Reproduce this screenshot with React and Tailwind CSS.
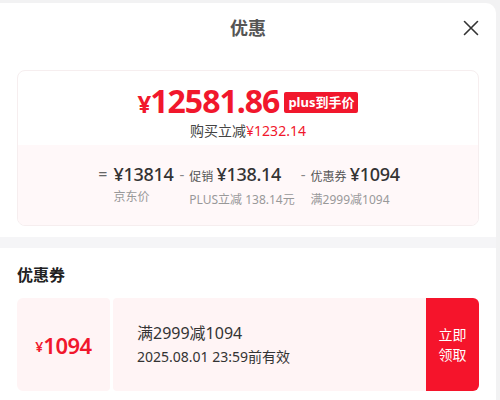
import React from "react";

export default function App() {
  const font = { fontFamily: '"Noto Sans", "Noto Sans CJK SC", sans-serif' };
  return (
    <div className="w-[500px] h-[400px] bg-[#f2f2f3] pt-[3px] pr-[4px] overflow-hidden" style={font}>
      <div className="bg-white rounded-tr-[10px] h-full flex flex-col">
        {/* header */}
        <div className="relative h-[50px] flex items-center justify-center shrink-0">
          <span className="text-[18px] font-bold text-[#555] leading-none">优惠</span>
          <svg className="absolute right-[17px] top-[17px]" width="16" height="16" viewBox="0 0 16 16" fill="none">
            <path d="M1.5 1.5L14.5 14.5M14.5 1.5L1.5 14.5" stroke="#333" strokeWidth="1.6" strokeLinecap="round" />
          </svg>
        </div>

        {/* price card */}
        <div className="px-[17px] pt-[17px] shrink-0">
          <div className="border border-[#f6eeef] rounded-[8px] overflow-hidden">
            <div className="h-[74px] flex flex-col items-center pt-[14px]">
              <div className="flex items-center gap-[5px]">
                <span className="text-[#f1172c] font-bold leading-none tracking-[-1px]">
                  <span className="text-[24px]">¥</span>
                  <span className="text-[32px]">12581.86</span>
                </span>
                <span className="bg-[#f1172c] text-white text-[13px] font-bold leading-none px-[4px] py-[4px] rounded-[2px] mt-[3px]">plus到手价</span>
              </div>
              <div className="mt-[7px] text-[14px] leading-none">
                <span className="text-[#444]">购买立减</span>
                <span className="text-[#f1172c]">¥1232.14</span>
              </div>
            </div>
            <div className="h-[80px] bg-[#fff8f9] flex justify-center pt-[17px]">
              <div className="flex gap-[6px] pl-[2px]">
                <div className="flex gap-[6px]">
                  <span className="text-[16px] text-[#666] leading-[24px]">=</span>
                  <div className="flex flex-col">
                    <span className="text-[18px] font-medium text-[#333] leading-[24px] tracking-[-0.3px]">¥13814</span>
                    <span className="text-[12px] text-[#999] leading-none mt-[5px]">京东价</span>
                  </div>
                </div>
                <div className="flex gap-[5px]">
                  <span className="text-[15px] text-[#888] leading-[24px]">-</span>
                  <div className="flex flex-col">
                    <span className="leading-[24px] text-[#333]">
                      <span className="text-[12px] text-[#555]">促销 </span>
                      <span className="text-[18px] font-medium tracking-[-0.3px]">¥138.14</span>
                    </span>
                    <span className="text-[12px] text-[#999] leading-none mt-[5px]">PLUS立减 138.14元</span>
                  </div>
                </div>
                <div className="flex gap-[5px]">
                  <span className="text-[15px] text-[#888] leading-[24px]">-</span>
                  <div className="flex flex-col">
                    <span className="leading-[24px] text-[#333]">
                      <span className="text-[12px] text-[#555]">优惠券 </span>
                      <span className="text-[18px] font-medium tracking-[-0.3px]">¥1094</span>
                    </span>
                    <span className="text-[12px] text-[#999] leading-none mt-[5px]">满2999减1094</span>
                  </div>
                </div>
              </div>
            </div>
          </div>
        </div>

        {/* gray band */}
        <div className="h-[11px] bg-[#f5f5f7] mt-[11px] shrink-0"></div>

        {/* coupons */}
        <div className="px-[17px] shrink-0">
          <div className="h-[50px] flex items-center text-[16px] font-bold text-[#222] pt-[3px]">优惠券</div>
          <div className="flex h-[93px]">
            <div className="w-[93px] bg-[#fff4f5] rounded-l-[6px] rounded-r-[4px] flex items-center justify-center text-[#f1172c] leading-none font-semibold">
              <span className="text-[14px] mt-[5px]">¥</span>
              <span className="text-[22px] tracking-[-0.5px]">1094</span>
            </div>
            <div className="w-[3px]"></div>
            <div className="flex-1 bg-[#fff4f5] rounded-l-[4px] flex flex-col justify-center pl-[24px] text-[#333]">
              <span className="text-[16px] leading-none">满2999减1094</span>
              <span className="text-[14px] leading-none mt-[9px]">2025.08.01 23:59前有效</span>
            </div>
            <div className="w-[53px] bg-[#f5142b] rounded-r-[6px] flex items-center justify-center text-white text-[14px] leading-[20px] text-center">
              立即<br />领取
            </div>
          </div>
        </div>
      </div>
    </div>
  );
}
